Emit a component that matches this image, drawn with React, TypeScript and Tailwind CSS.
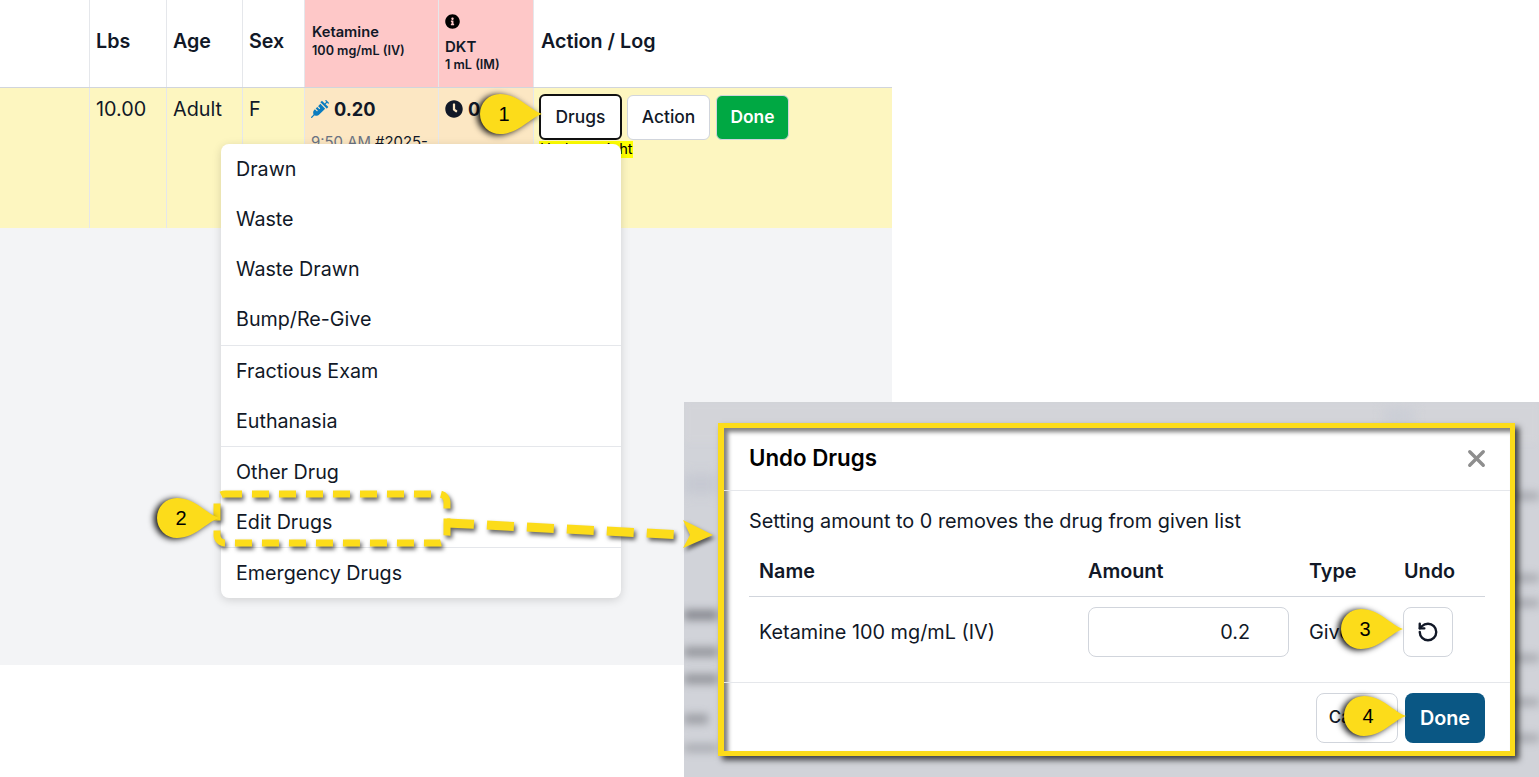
import React from "react";
import { FaSyringe, FaClock, FaInfoCircle } from "react-icons/fa";
import { RotateCcw, X } from "lucide-react";

function Callout({ n, className }: { n: number; className: string }) {
  return (
    <div className={"absolute h-[40px] w-[62px] " + className}>
      <svg width="62" height="40" viewBox="0 0 62 40" className="absolute left-0 top-0 overflow-visible drop-shadow-[-3px_1px_3px_rgba(0,0,0,0.95)]">
        <path d="M62 20 C50 24 38 40 20 40 A20 20 0 0 1 20 0 C38 0 50 16 62 20 Z" fill="#fcdc1a" />
      </svg>
      <span className="absolute left-0 top-0 flex h-[40px] w-[48px] items-center justify-center font-['Liberation_Sans',sans-serif] text-[20px] text-black">{n}</span>
    </div>
  );
}

const menuGroups = [
  ["Drawn", "Waste", "Waste Drawn", "Bump/Re-Give"],
  ["Fractious Exam", "Euthanasia"],
  ["Other Drug", "Edit Drugs"],
  ["Emergency Drugs"],
];

function Menu() {
  return (
    <div className="absolute left-[221px] top-[144px] w-[400px] divide-y divide-gray-200 rounded-lg bg-white pt-[1px] shadow-[0_2px_10px_rgba(0,0,0,0.15)]">
      {menuGroups.map((g, i) => (
        <div key={i}>
          {g.map((t) => (
            <div key={t} className={(i > 0 ? "pt-[2px] " : "") + "flex h-[50px] items-center pl-[15px] text-[19.7px] text-[#111827]"}>{t}</div>
          ))}
        </div>
      ))}
    </div>
  );
}

function Table() {
  return (
    <div className="w-[892px] text-[#111827]">
      <div className="flex h-[88px] border-b border-gray-300 bg-white text-[19.7px] font-semibold">
        <div className="w-[90px] border-r border-gray-200" />
        <div className="flex w-[77px] items-center border-r border-gray-200 px-[6px] pb-[3px]">Lbs</div>
        <div className="flex w-[76px] items-center border-r border-gray-200 px-[6px] pb-[3px]">Age</div>
        <div className="flex w-[62px] items-center border-r border-gray-200 px-[6px] pb-[3px]">Sex</div>
        <div className="flex w-[134px] flex-col border-r border-gray-200 bg-[#fec8c8] px-[7px] pt-[22px]">
          <div className="text-[14.7px] leading-[20px]">Ketamine</div>
          <div className="text-[12.6px] font-semibold leading-[18px]">100 mg/mL (IV)</div>
        </div>
        <div className="flex w-[95px] flex-col border-r border-gray-200 bg-[#fec8c8] px-[6px] pt-[14px]">
          <FaInfoCircle className="h-[15px] w-[15px] text-black" />
          <div className="mt-[8px] text-[15px] leading-[19px]">DKT</div>
          <div className="text-[12.6px] font-semibold leading-[17px]">1 mL (IM)</div>
        </div>
        <div className="flex flex-1 items-center px-[7px] pb-[3px]">Action / Log</div>
      </div>
      <div className="flex h-[140px] bg-[#fdf6c0] text-[19.8px] leading-[28px]">
        <div className="w-[90px] border-r border-gray-200" />
        <div className="w-[77px] border-r border-gray-200 px-[6px] pt-[7px]">10.00</div>
        <div className="w-[76px] border-r border-gray-200 px-[6px] pt-[7px]">Adult</div>
        <div className="w-[62px] border-r border-gray-200 px-[6px] pt-[7px]">F</div>
        <div className="w-[134px] border-r border-gray-200 bg-[#fce7c3] px-[6px] pt-[7px]">
          <div className="flex items-center gap-[5px] text-[18.2px] font-bold">
            <FaSyringe className="h-[18px] w-[18px] text-[#0a7cc0]" />
            <span>0.20</span>
          </div>
          <div className="mt-[7px] whitespace-nowrap text-[14.9px] leading-[24px]"><span className="text-gray-500">9:50 AM</span> #2025-</div>
        </div>
        <div className="w-[95px] border-r border-gray-200 bg-[#fce7c3] px-[6px] pt-[7px]">
          <div className="flex items-center gap-[5px] text-[18.2px] font-bold">
            <FaClock className="h-[18px] w-[18px]" />
            <span>0.20</span>
          </div>
        </div>
        <div className="flex-1 pl-[5px] pt-[6px]">
          <div className="flex items-center text-[17.4px] font-medium">
            <button className="h-[46px] w-[83px] rounded-md border-2 border-[#111111] bg-white">Drugs</button>
            <button className="ml-[5px] h-[45px] w-[83px] rounded-md border border-gray-300 bg-white">Action</button>
            <button className="ml-[6px] h-[45px] w-[73px] rounded-md border border-gray-300 bg-[#00a843] font-semibold text-white">Done</button>
          </div>
          <div className="mt-[1px] w-fit bg-[#ffff00] pl-[1px] text-[14.6px] leading-[17px] text-black">Under weight</div>
        </div>
      </div>
      <div className="h-[437px] bg-[#f3f4f6]" />
    </div>
  );
}

function Modal() {
  return (
    <div className="absolute left-[34px] top-[21px] flex h-[333px] w-[797px] flex-col border-[5px] border-l-[6px] border-[#fcdc1a] bg-white text-[#111827] shadow-[4px_4px_6px_rgba(0,0,0,0.7),inset_4px_4px_4px_rgba(0,0,0,0.5)]">
      <div className="flex h-[63px] shrink-0 items-center justify-between border-b border-gray-200 pb-[2px] pl-[25px] pr-[20px]">
        <span className="text-[22.3px] font-semibold text-black">Undo Drugs</span>
        <X className="h-[27px] w-[27px] text-[#8e8e8e]" strokeWidth={3} />
      </div>
      <div className="flex-1 px-[25px]">
        <div className="pt-[17px] text-[19.85px] leading-[27px]">Setting amount to 0 removes the drug from given list</div>
        <div className="mt-[23px] flex h-[39px] w-[736px] border-b border-gray-300 text-[19.8px] font-semibold leading-[27px]">
          <div className="w-[339px] pl-[10px]">Name</div>
          <div className="w-[221px]">Amount</div>
          <div className="w-[95px]">Type</div>
          <div>Undo</div>
        </div>
        <div className="flex h-[85px] w-[736px] items-start pt-[10px] text-[19.85px] leading-[50px]">
          <div className="w-[339px] pl-[10px]">Ketamine 100 mg/mL (IV)</div>
          <div className="flex h-[50px] w-[201px] items-center justify-end rounded-lg border border-gray-300 pr-[38px]">0.2</div>
          <div className="ml-[20px] w-[94px]">Given</div>
          <button className="flex h-[50px] w-[50px] items-center justify-center rounded-lg border border-gray-300">
            <RotateCcw className="h-[22px] w-[22px]" strokeWidth={2.6} />
          </button>
        </div>
      </div>
      <div className="flex h-[69px] shrink-0 items-center justify-end gap-[7px] border-t border-gray-200 pr-[25px] pt-[2px]">
        <button className="h-[50px] w-[82px] rounded-lg border border-gray-300 bg-white text-[17px] font-medium">Cancel</button>
        <button className="h-[50px] w-[80px] rounded-lg bg-[#0a5784] pt-[1px] text-[19.8px] font-semibold text-white">Done</button>
      </div>
    </div>
  );
}

function Blurred() {
  return (
    <div className="absolute left-[684px] top-[402px] h-[375px] w-[855px] overflow-hidden bg-[#d1d3d9]">
      <div className="absolute left-0 top-0 h-[40px] w-[855px] bg-[#d3d4d9] blur-[3px]" />
      <div className="absolute left-0 top-[72px] h-[20px] w-[34px] bg-[#c6c9d2] blur-[6px]" />
      <div className="absolute left-0 top-[208px] h-[10px] w-[34px] bg-[#85878e] blur-[4px]" />
      <div className="absolute left-0 top-[245px] h-[10px] w-[34px] bg-[#94969c] blur-[4px]" />
      <div className="absolute left-0 top-[272px] h-[10px] w-[34px] bg-[#94969c] blur-[4px]" />
      <div className="absolute left-0 top-[312px] h-[10px] w-[24px] bg-[#9c9ea4] blur-[4px]" />
      <div className="absolute left-0 top-[342px] h-[8px] w-[34px] bg-[#a8aab0] blur-[4px]" />
      <div className="absolute left-[700px] top-[6px] h-[16px] w-[30px] bg-[#cbced6] blur-[6px]" />
      <div className="absolute left-[830px] top-[90px] h-[8px] w-[25px] bg-[#a8aab0] blur-[4px]" />
      <div className="absolute left-[830px] top-[172px] h-[8px] w-[25px] bg-[#a8aab0] blur-[4px]" />
      <div className="absolute left-[830px] top-[197px] h-[8px] w-[25px] bg-[#a8aab0] blur-[4px]" />
      <div className="absolute left-[830px] top-[252px] h-[8px] w-[25px] bg-[#a8aab0] blur-[4px]" />
      <div className="absolute left-[830px] top-[296px] h-[8px] w-[25px] bg-[#a8aab0] blur-[4px]" />
      <div className="absolute left-[830px] top-[332px] h-[8px] w-[25px] bg-[#a8aab0] blur-[4px]" />
      <Modal />
    </div>
  );
}

function DashAnnotation() {
  return (
    <svg width="1539" height="777" className="pointer-events-none absolute left-0 top-0 drop-shadow-[2px_3px_2px_rgba(0,0,0,0.6)]">
      <rect x="217" y="494" width="230" height="49" rx="8" fill="none" stroke="#fcdc1a" strokeWidth="7" strokeDasharray="17 10" />
      <path d="M447 523 L684 535" fill="none" stroke="#fcdc1a" strokeWidth="9" strokeDasharray="27 13" />
      <path d="M683 520 L713 535 L683 548 L690 535 Z" fill="#fcdc1a" />
    </svg>
  );
}

export default function App() {
  return (
    <div className="relative h-[777px] w-[1539px] overflow-hidden bg-white font-['Inter',sans-serif]">
      <Table />
      <Menu />
      <Blurred />
      <DashAnnotation />
      <Callout n={1} className="left-[480px] top-[94px]" />
      <Callout n={2} className="left-[157px] top-[498px]" />
      <Callout n={3} className="left-[1341px] top-[609px]" />
      <Callout n={4} className="left-[1344px] top-[696px]" />
    </div>
  );
}
